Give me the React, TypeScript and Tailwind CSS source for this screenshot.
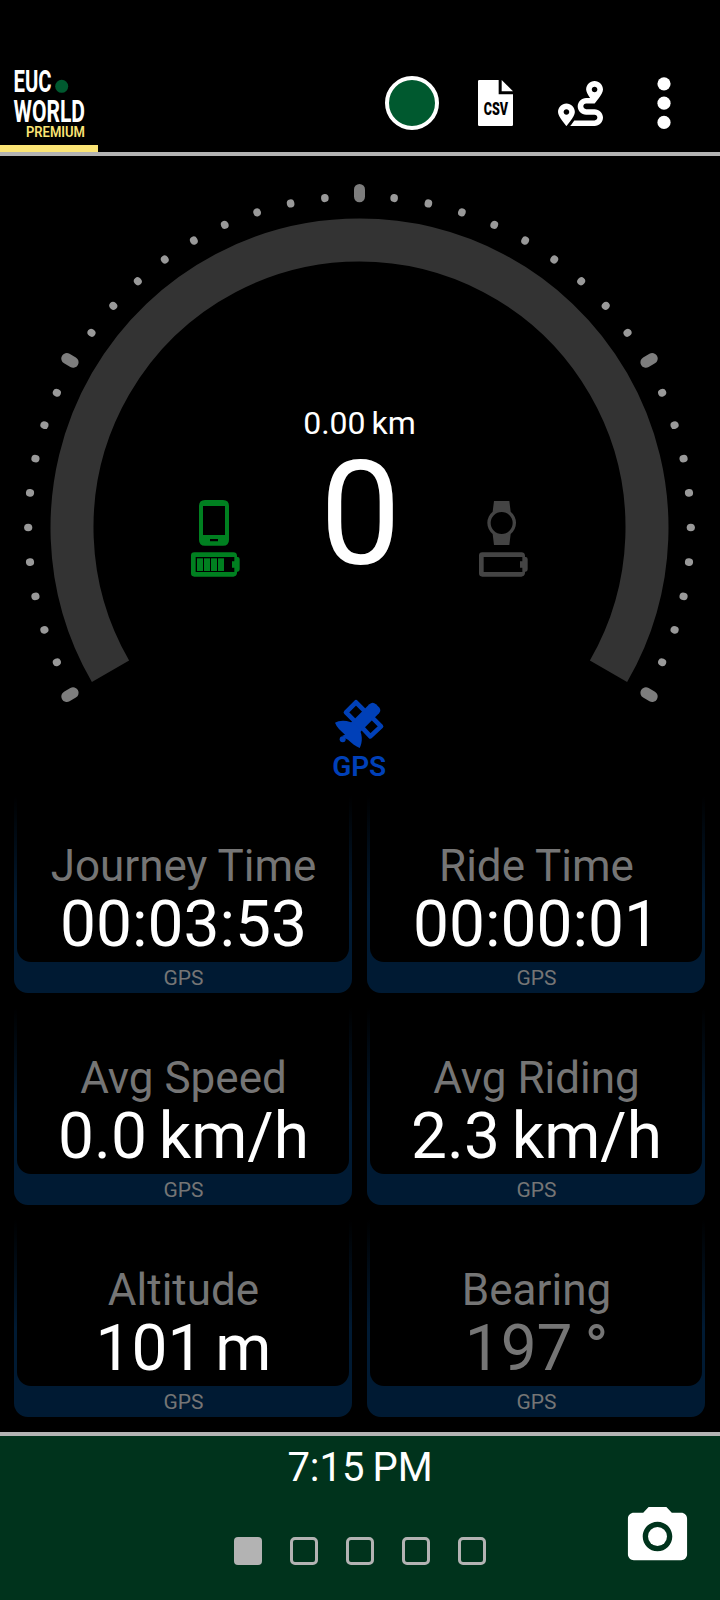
import { FaRoute } from "react-icons/fa"
import { MdPhotoCamera } from "react-icons/md"

const CENTER_X = 359.5
const CENTER_Y = 371.5

const tiles = [
  { label: "Journey Time", value: "00:03:53", active: true },
  { label: "Ride Time", value: "00:00:01", active: true },
  { label: "Avg Speed", value: "0.0 km/h", active: true },
  { label: "Avg Riding", value: "2.3 km/h", active: true },
  { label: "Altitude", value: "101 m", active: true },
  { label: "Bearing", value: "197 °", active: false },
]

// 240 degree scale, one tick every 6 degrees
const ticks = Array.from({ length: 41 }, (_, i) => ({
  angle: -120 + i * 6,
  major: i % 10 === 0,
}))

function Logo() {
  return (
    <svg className="w-24 h-20 overflow-visible" viewBox="0 0 96 80" fontFamily="Roboto, sans-serif">
      <text x="13.5" y="32" fontSize="32" fontWeight="700" fill="#fff" textLength="38" lengthAdjust="spacingAndGlyphs">
        EUC
      </text>
      <circle cx="61.7" cy="26.3" r="6.5" fill="#00592f" />
      <text x="13.5" y="61.5" fontSize="32" fontWeight="700" fill="#fff" textLength="71.5" lengthAdjust="spacingAndGlyphs">
        WORLD
      </text>
      <text x="26" y="77" fontSize="14" fontWeight="600" fill="#fbe475" textLength="59" lengthAdjust="spacingAndGlyphs">
        PREMIUM
      </text>
    </svg>
  )
}

function CsvIcon() {
  return (
    <svg className="w-[35px] h-[46px] overflow-visible" viewBox="0 0 105 138">
      <path d="M4 0H62V43H105V134Q105 138 101 138H4Q0 138 0 134V4Q0 0 4 0Z" fill="#fff" />
      <path d="M71 0L105 34H71Z" fill="#fff" />
      <text x="17" y="105" fontFamily="Roboto, sans-serif" fontSize="53" fontWeight="900" fill="#000" textLength="73" lengthAdjust="spacingAndGlyphs">
        CSV
      </text>
    </svg>
  )
}

function Header() {
  return (
    <header className="flex h-[156px] justify-between border-b-4 border-[#b3b3b3]">
      <div className="flex w-[98px] flex-col justify-end">
        <Logo />
        <div className="mt-[5px] h-[7px] bg-[#fbe475]" />
      </div>
      <div className="flex h-[54px] mt-[76px] mr-[49px] items-center">
        <div className="size-[54px] rounded-full border-4 border-white bg-[#00592f]" />
        <div className="ml-[39px]">
          <CsvIcon />
        </div>
        <FaRoute className="ml-[45px] size-[45px] text-white" />
        <svg className="ml-[54px] w-[14px] h-[54px]" viewBox="0 0 14 54" fill="#fff">
          <circle cx="7" cy="7.8" r="6.6" />
          <circle cx="7" cy="27.2" r="6.6" />
          <circle cx="7" cy="46.4" r="6.6" />
        </svg>
      </div>
    </header>
  )
}

function Battery({ level }: { level: number }) {
  return (
    <>
      <path
        fillRule="evenodd"
        d="M43 187H160Q170 187 171 197V201H174Q179 202 179 208V238Q179 244 174 245H171V250Q169 260 160 260H43Q33 260 33 250V197Q33 187 43 187ZM47 201V246H163V233H156V214H163V201Z"
      />
      {Array.from({ length: level }, (_, i) => (
        <rect key={i} x={51 + i * 21} y="205" width="18" height="38" />
      ))}
    </>
  )
}

function PhoneStatus() {
  return (
    <svg className="w-[70px] h-[95px]" viewBox="0 0 210 285" fill="#008020">
      <path
        fillRule="evenodd"
        d="M75 30H129Q147 30 147 48V149Q147 167 129 167H75Q57 167 57 149V48Q57 30 75 30ZM69 48V135H135V48ZM90 147V154H114V147Z"
      />
      <Battery level={4} />
    </svg>
  )
}

function WatchStatus() {
  return (
    <svg className="w-[70px] h-[95px]" viewBox="0 0 210 285" fill="#444">
      <path
        fillRule="evenodd"
        d="M78 33H124L128 65A43 43 0 0 1 128 132L124 165H78L74 132A43 43 0 0 1 74 65ZM101 66A33 33 0 1 0 101 132A33 33 0 1 0 101 66Z"
      />
      <Battery level={0} />
    </svg>
  )
}

function GpsStatus() {
  return (
    <svg className="w-[100px] h-[110px]" viewBox="0 0 300 330" fill="#0040b8">
      <g fill="none" stroke="#0040b8" strokeWidth="14" strokeLinejoin="round">
        <path d="M138 67L168 97L138 127L108 97Z" />
        <path d="M183 109L213 139L181 169L151 137Z" />
      </g>
      <path d="M178 73Q188 64 198 73L207 82Q215 91 207 100L150 157L121 130Z" />
      <path d="M75 128C90 118 122 120 140 137C160 157 158 188 149 204C138 199 125 190 114 179L104 174L97 167L105 164C92 152 80 141 75 128Z" />
      <circle cx="98" cy="178" r="9" />
      <text x="67" y="288" fontFamily="Roboto, sans-serif" fontSize="84" fontWeight="600" textLength="161" lengthAdjust="spacing">
        GPS
      </text>
    </svg>
  )
}

function Gauge() {
  return (
    <section className="grid h-[640px]">
      <svg className="[grid-area:1/1] w-[720px] h-[640px]" viewBox="0 0 720 640">
        <path d="M110.5 515.25A287.5 287.5 0 1 1 608.5 515.25" fill="none" stroke="#333" strokeWidth="43" />
        {ticks.map((tick) => (
          <g key={tick.angle} transform={`rotate(${tick.angle} ${CENTER_X} ${CENTER_Y})`}>
            {tick.major ? (
              <rect x={CENTER_X - 5.5} y={CENTER_Y - 343.5} width="11" height="18.3" rx="5.5" fill="#7d7d7d" />
            ) : (
              <ellipse cx={CENTER_X} cy={CENTER_Y - 331.3} rx="3.8" ry="4.1" fill="#999" />
            )}
          </g>
        ))}
      </svg>
      <div className="[grid-area:1/1] flex flex-col pt-[247px]">
        <div className="pr-px text-center text-[32px] leading-10 [word-spacing:-2px]">0.00 km</div>
        <div className="flex h-[142px] items-end justify-between pl-[180px] pr-[182px]">
          <PhoneStatus />
          <div className="ml-[3px] self-start text-[144px] leading-[143px]">0</div>
          <WatchStatus />
        </div>
        <div className="mt-[95px] flex justify-center">
          <GpsStatus />
        </div>
      </div>
    </section>
  )
}

export default function App() {
  return (
    <div className="flex h-[1600px] w-[720px] flex-col overflow-hidden bg-black font-['Roboto',sans-serif] text-white">
      <Header />
      <Gauge />

      <main className="grid grid-cols-2 gap-[15px] pl-[14px] pr-[15px]">
        {tiles.map((tile) => (
          <div
            key={tile.label}
            className="h-[197px] rounded-b-[14px] bg-linear-to-b/srgb from-black to-[#001a33] to-55% px-[3px] text-center"
          >
            <div className="h-[166px] rounded-b-[14px] bg-black pt-[45px] pl-px">
              <div className="text-[44px] leading-[50px] text-[#757575]">{tile.label}</div>
              <div
                className={`mt-0.5 text-[64px] leading-[64px] [word-spacing:-4px] ${tile.active ? "text-white" : "text-[#757575]"}`}
              >
                {tile.value}
              </div>
            </div>
            <div className="pt-px pl-px text-[21px] leading-[31px] text-[#757575]">GPS</div>
          </div>
        ))}
      </main>

      <footer className="mt-[15px] flex-1 border-t-4 border-[#b3b3b3] bg-[#00331c] pt-[9px]">
        <div className="text-center text-[40px] leading-[46px] [word-spacing:-2px]">7:15 PM</div>
        <div className="grid grid-cols-[1fr_auto_1fr] pt-[9px]">
          <div />
          <div className="flex gap-7 pt-[37px]">
            <div className="size-7 rounded-[4px] bg-[#b3b3b3]" />
            {[2, 3, 4, 5].map((page) => (
              <div key={page} className="size-7 rounded-[5px] border-3 border-[#b3b3b3]" />
            ))}
          </div>
          <MdPhotoCamera className="mr-[27px] mt-px size-[71px] justify-self-end text-white" />
        </div>
      </footer>
    </div>
  )
}
